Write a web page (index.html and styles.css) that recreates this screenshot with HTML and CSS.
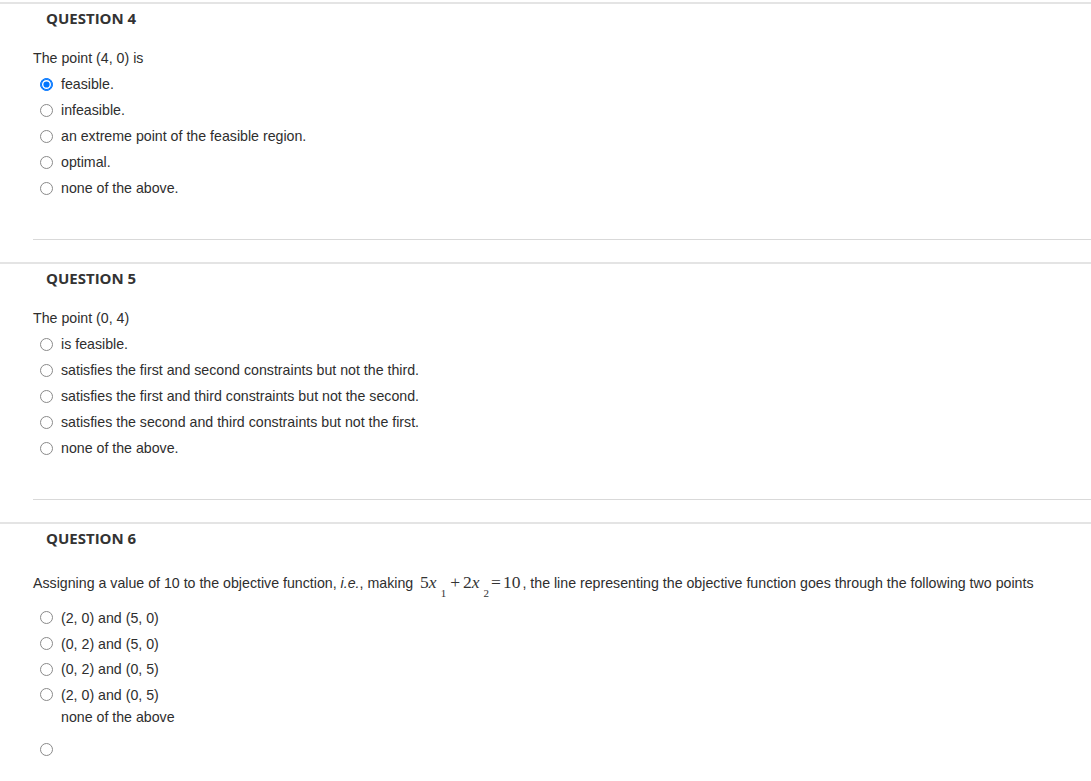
FILE: index.html
```html
<!DOCTYPE html>
<html>
<head>
<meta charset="utf-8">
<link rel="stylesheet" href="styles.css">
</head>
<body>
<div class="question">
  <div class="qbody">
    <h3 class="qhead">QUESTION 4</h3>
    <p class="qtext">The point (4, 0) is</p>
    <ul class="opts">
      <li class="opt"><span class="radio checked"></span><span>feasible.</span></li>
      <li class="opt"><span class="radio"></span><span>infeasible.</span></li>
      <li class="opt"><span class="radio"></span><span>an extreme point of the feasible region.</span></li>
      <li class="opt"><span class="radio"></span><span>optimal.</span></li>
      <li class="opt"><span class="radio"></span><span>none of the above.</span></li>
    </ul>
  </div>
</div>
<div class="question">
  <div class="qbody">
    <h3 class="qhead">QUESTION 5</h3>
    <p class="qtext">The point (0, 4)</p>
    <ul class="opts">
      <li class="opt"><span class="radio"></span><span>is feasible.</span></li>
      <li class="opt"><span class="radio"></span><span>satisfies the first and second constraints but not the third.</span></li>
      <li class="opt"><span class="radio"></span><span>satisfies the first and third constraints but not the second.</span></li>
      <li class="opt"><span class="radio"></span><span>satisfies the second and third constraints but not the first.</span></li>
      <li class="opt"><span class="radio"></span><span>none of the above.</span></li>
    </ul>
  </div>
</div>
<div class="question last">
  <div class="qbody">
    <h3 class="qhead">QUESTION 6</h3>
    <p class="qtext math-line">Assigning a value of 10 to the objective function, <i>i.e.</i>, making <span class="math">5<i>x</i><sub>1</sub><span class="op">+</span>2<i>x</i><sub>2</sub><span class="op eq">=</span>10</span>, the line representing the objective function goes through the following two points</p>
    <ul class="opts opts6">
      <li class="opt"><span class="radio"></span><span>(2, 0) and (5, 0)</span></li>
      <li class="opt"><span class="radio"></span><span>(0, 2) and (5, 0)</span></li>
      <li class="opt"><span class="radio"></span><span>(0, 2) and (0, 5)</span></li>
      <li class="opt"><span class="radio"></span><span>(2, 0) and (0, 5)</span></li>
    </ul>
    <div class="orphan-text">none of the above</div>
    <div class="opt orphan-radio"><span class="radio"></span></div>
  </div>
</div>
</body>
</html>
```
FILE: styles.css
```css
html, body {
  margin: 0;
  padding: 0;
  background: #fff;
}
body {
  padding-top: 2px;
  font-family: "Liberation Sans", Arial, sans-serif;
  font-size: 14.2px;
  color: #2e2e2e;
}
.question {
  border-top: 2px solid #e4e4e4;
  padding: 0 0 22px 33px;
}
.question.last {
  padding-bottom: 0;
}
.qbody {
  border-bottom: 1px solid #d9d9d9;
}
.question.last .qbody {
  border-bottom: none;
}
.qhead {
  margin: 0;
  padding-left: 13px;
  height: 28px;
  line-height: 28px;
  font-family: "Open Sans", sans-serif;
  font-weight: 700;
  font-size: 15px;
  color: #333;
}
.qtext {
  margin: 16px 0 0 0;
  height: 20px;
  line-height: 20px;
}
.opts {
  list-style: none;
  margin: 3px 0 38px 0;
  padding: 0;
}
.opt {
  display: flex;
  align-items: center;
  height: 26px;
  padding-left: 7px;
}
.radio {
  box-sizing: border-box;
  width: 13px;
  height: 13px;
  border-radius: 50%;
  border: 1px solid #8a8a8a;
  background: #fff;
  margin-right: 8px;
  flex: none;
}
.radio.checked {
  border-color: #0075ff;
  background: #0075ff;
  box-shadow: inset 0 0 0 1px #0075ff, inset 0 0 0 2.4px #fff;
}
.math-line {
  height: 28px;
  line-height: 28px;
}
.math {
  font-family: "Liberation Serif", "Times New Roman", serif;
  font-size: 17.5px;
  color: #333;
  margin: 0 2px 0 3px;
}
.math i {
  font-style: italic;
}
.math sub {
  font-size: 11px;
  vertical-align: -9px;
  line-height: 0;
  margin-left: 4px;
  margin-right: 1px;
}
.math .op {
  margin: 0 3px;
}
.math .op.eq {
  margin: 0 2px 0 1px;
}
.opts6 {
  margin: 9px 0 0 0;
}
.opts6 .opt {
  height: 25.7px;
}
.orphan-text {
  padding-left: 28px;
  height: 18px;
  line-height: 18px;
}
.orphan-radio {
  margin-top: 11px;
}
```
